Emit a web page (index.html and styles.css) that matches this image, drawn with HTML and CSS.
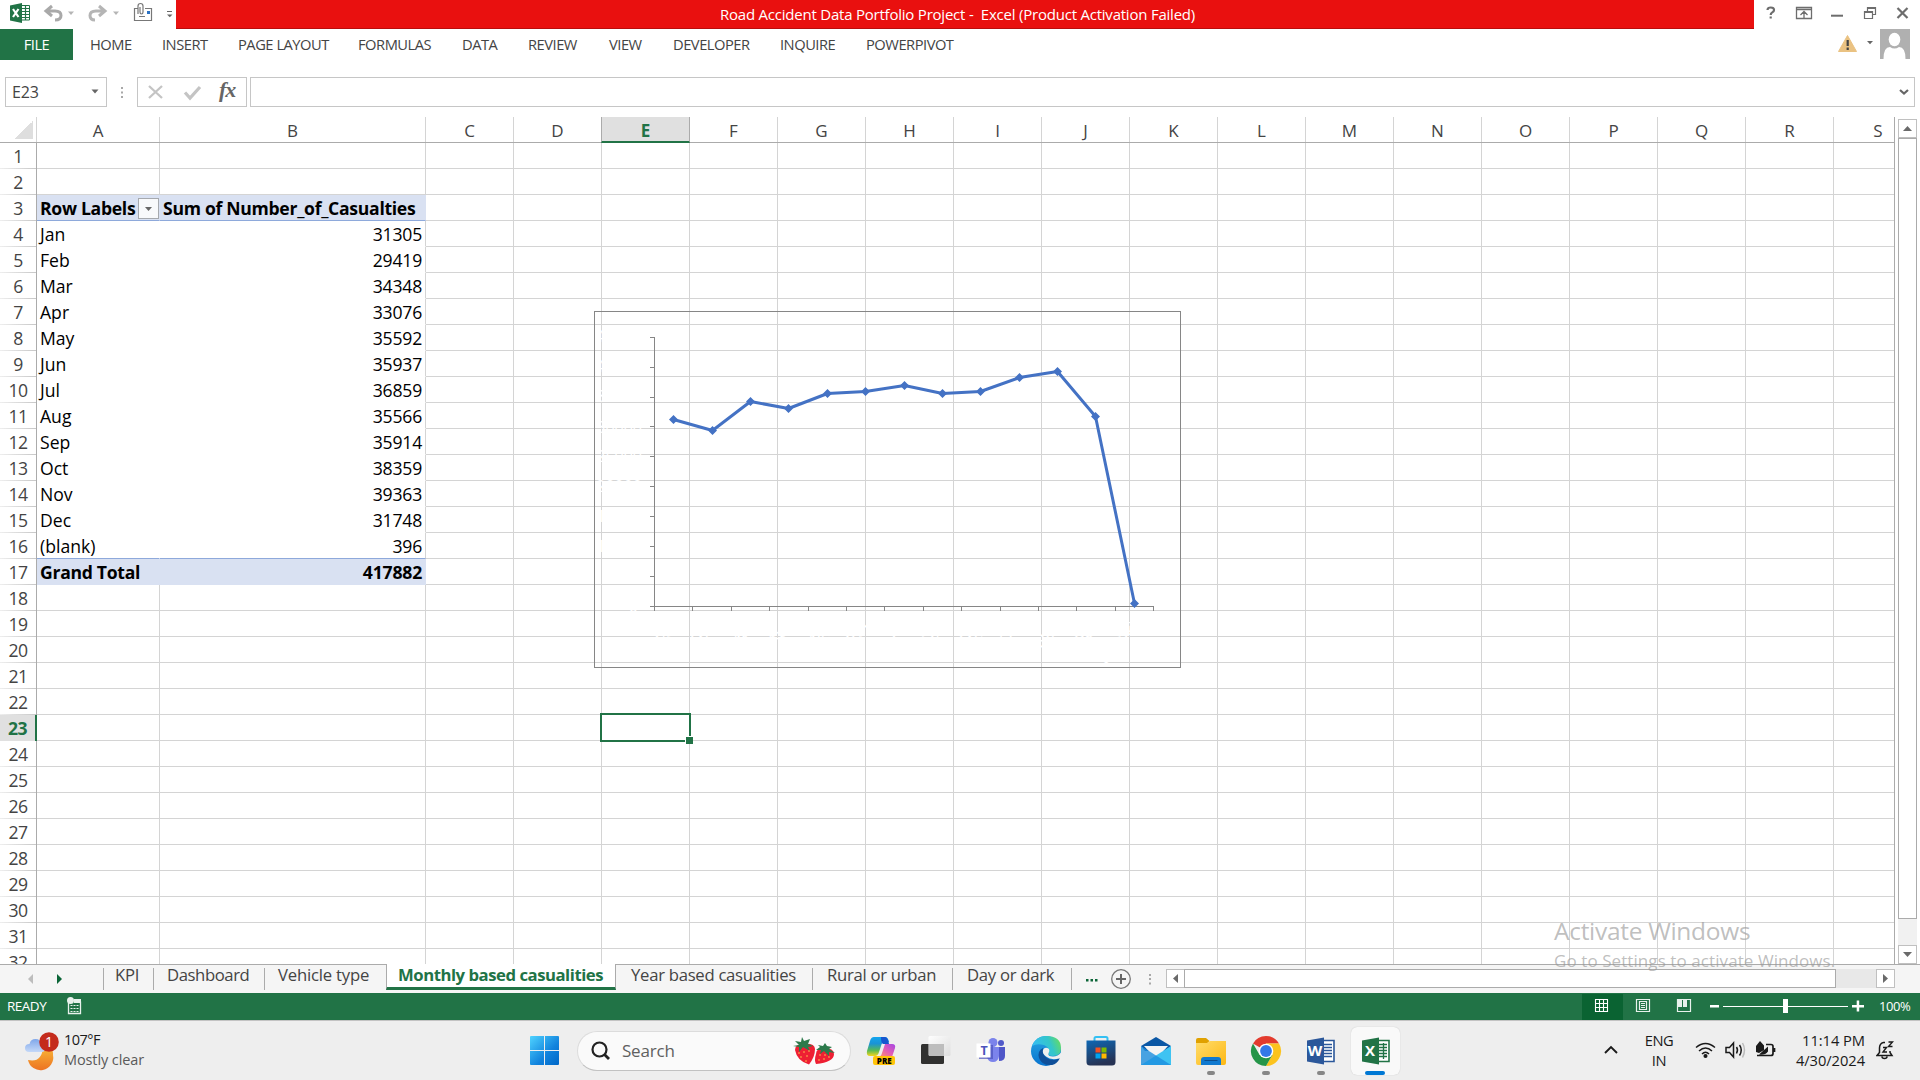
FILE: index.html
```html
<!DOCTYPE html>
<html lang="en">
<head>
<meta charset="utf-8">
<title>Road Accident Data Portfolio Project - Excel</title>
<link rel="stylesheet" href="styles.css">
</head>
<body>
<header class="titlebar">
  <div class="quick">
    <svg width="176" height="29" viewBox="0 0 176 29">
      <path d="M10 5.500L22 3v20l-12-2.500z" fill="#217346"/>
      <path d="M22 5.500h7.500v14.500H22" fill="#fff" stroke="#217346"/>
      <path d="M22 8.500h7M22 11.500h7M22 14.500h7M22 17.500h7M25.500 6v14" stroke="#217346" stroke-width="1.200"/>
      <path d="M13 9l5.500 8M18.500 9L13 17" stroke="#fff" stroke-width="2.200"/>
      <path d="M52 6l-6 5 6 5M47 11h8q6 0 6 4.500t-6 4.500" fill="none" stroke="#a9a9a9" stroke-width="3"/>
      <path d="M68 11.500h6l-3 3.500z" fill="#b5b5b5"/>
      <path d="M99 6l6 5-6 5M104 11h-8q-6 0-6 4.500t5 4.500" fill="none" stroke="#b5b5b5" stroke-width="3"/>
      <path d="M113 11.500h6l-3 3.500z" fill="#b5b5b5"/>
      <path d="M138 8.500h-3.500v12h17v-12H145" fill="#fff" stroke="#777" stroke-width="1.200"/>
      <path d="M138 14V6q0-2.500 2.500-2.500T143 6v6q0 2-1.500 2T140 12V7M139 16.500h6" fill="none" stroke="#777" stroke-width="1.200"/>
      <path d="M147 11h3v3h-3z" fill="#2b72c4"/>
      <path d="M167 11.500h5" stroke="#666"/><path d="M167 14.500h5.500l-2.700 2.800z" fill="#666"/>
    </svg>
  </div>
  <div class="title"><span>Road Accident Data Portfolio Project -&nbsp; Excel (Product Activation Failed)</span></div>
  <div class="winctl">
    <svg width="166" height="29" viewBox="0 0 166 29" fill="none" stroke="#6d6d6d">
      <path d="M13.500 10q0-2.500 3.300-2.500T20 10q0 1.500-1.700 2.400t-1.600 2.600M16.700 16.500v2" stroke-width="2.200"/>
      <path d="M42.500 7.500h15v11h-15zM42.500 9.500h15M50 18v-6M46.500 15l3.500-3.500L53.500 15" stroke-width="1.300"/>
      <path d="M77 15.700h12" stroke-width="2"/>
      <path d="M110.500 11.500h8v7h-8zM110.500 12.500h8M113.500 11V7.500h8v7H119M113.500 8.500h8" stroke-width="1.200"/>
      <path d="M143.500 8l10 10M153.500 8l-10 10" stroke-width="2.200"/>
    </svg>
  </div>
</header>

<nav class="ribbon">
  <span class="file">FILE</span><span>HOME</span><span>INSERT</span><span>PAGE LAYOUT</span><span>FORMULAS</span><span>DATA</span><span>REVIEW</span><span>VIEW</span><span>DEVELOPER</span><span>INQUIRE</span><span>POWERPIVOT</span>
  <svg class="account" width="80" height="31" viewBox="0 0 80 31">
    <path d="M15.500 6.500L24.500 22.500H6.500z" fill="#eac282" stroke="#eac282" stroke-linejoin="round"/>
    <path d="M15.700 11v6M15.700 18.500v2.500" stroke="#444" stroke-width="2.200"/>
    <path d="M35 12h6l-3 3.200z" fill="#666"/>
    <path d="M48 0h30v30H48z" fill="#b0b0b0"/>
    <ellipse cx="62.500" cy="10.500" rx="5.800" ry="6.700" fill="#fff"/>
    <path d="M51.500 30q0-12 6.500-12 4.500 3 9 0 6.500 0 6.500 12z" fill="#fff"/>
  </svg>
</nav>

<div class="formulabar">
  <div class="namebox"><span>E23</span><svg width="8" height="5"><path d="M.5.500h7L4 4.500z" fill="#666"/></svg></div>
  <svg class="grip" width="30" height="30"><path d="M14 10h2v2h-2zM14 14.500h2v2h-2zM14 19h2v2h-2z" fill="#a8a8a8"/></svg>
  <div class="fxbox">
    <svg width="70" height="28" fill="none" stroke="#c4c4c4"><path d="M11 8l13 12M24 8L11 20" stroke-width="2.300"/><path d="M47 14.500l5 5.500L62 9" stroke-width="3.200"/></svg>
    <i>fx</i>
  </div>
  <div class="input"><svg width="10" height="6"><path d="M1 1l4 3.500L9 1" fill="none" stroke="#666" stroke-width="2.200"/></svg></div>
</div>

<main class="sheet">
  <div class="grid">
    <div class="colhead">
      <span class="corner"></span><span class="ca">A</span><span class="cb">B</span><span>C</span><span>D</span><span class="sel">E</span><span>F</span><span>G</span><span>H</span><span>I</span><span>J</span><span>K</span><span>L</span><span>M</span><span>N</span><span>O</span><span>P</span><span>Q</span><span>R</span><span>S</span>
    </div>
    <div class="rows">
      <div class="row"><b>1</b><span></span><span></span><i></i></div>
      <div class="row"><b>2</b><span></span><span></span><i></i></div>
      <div class="row head"><b>3</b><span><em class="t1">Row Labels</em><svg class="filter" width="21" height="21"><rect x=".5" y=".5" width="20" height="20" fill="#f8f9fb" stroke="#a6a9ae"/><path d="M7 9h7l-3.500 4z" fill="#666"/></svg></span><span><em class="t2">Sum of Number_of_Casualties</em></span><i></i></div>
      <div class="row data"><b>4</b><span>Jan</span><span>31305</span><i></i></div>
      <div class="row data"><b>5</b><span>Feb</span><span>29419</span><i></i></div>
      <div class="row data"><b>6</b><span>Mar</span><span>34348</span><i></i></div>
      <div class="row data"><b>7</b><span>Apr</span><span>33076</span><i></i></div>
      <div class="row data"><b>8</b><span>May</span><span>35592</span><i></i></div>
      <div class="row data"><b>9</b><span>Jun</span><span>35937</span><i></i></div>
      <div class="row data"><b>10</b><span>Jul</span><span>36859</span><i></i></div>
      <div class="row data"><b>11</b><span>Aug</span><span>35566</span><i></i></div>
      <div class="row data"><b>12</b><span>Sep</span><span>35914</span><i></i></div>
      <div class="row data"><b>13</b><span>Oct</span><span>38359</span><i></i></div>
      <div class="row data"><b>14</b><span>Nov</span><span>39363</span><i></i></div>
      <div class="row data"><b>15</b><span>Dec</span><span>31748</span><i></i></div>
      <div class="row data last"><b>16</b><span>(blank)</span><span>396</span><i></i></div>
      <div class="row data total"><b>17</b><span>Grand Total</span><span>417882</span><i></i></div>
      <div class="row"><b>18</b><span></span><span></span><i></i></div>
      <div class="row"><b>19</b><span></span><span></span><i></i></div>
      <div class="row"><b>20</b><span></span><span></span><i></i></div>
      <div class="row"><b>21</b><span></span><span></span><i></i></div>
      <div class="row"><b>22</b><span></span><span></span><i></i></div>
      <div class="row active"><b>23</b><span></span><span></span><i></i></div>
      <div class="row"><b>24</b><span></span><span></span><i></i></div>
      <div class="row"><b>25</b><span></span><span></span><i></i></div>
      <div class="row"><b>26</b><span></span><span></span><i></i></div>
      <div class="row"><b>27</b><span></span><span></span><i></i></div>
      <div class="row"><b>28</b><span></span><span></span><i></i></div>
      <div class="row"><b>29</b><span></span><span></span><i></i></div>
      <div class="row"><b>30</b><span></span><span></span><i></i></div>
      <div class="row"><b>31</b><span></span><span></span><i></i></div>
      <div class="row"><b>32</b><span></span><span></span><i></i></div>
    </div>
    <div class="cursor"></div>
    <svg class="chart" width="587" height="357" viewBox="594 311 587 357">
      <rect x="594.500" y="311.500" width="586" height="356" fill="none" stroke="#868686"/>
      <g class="labels" text-anchor="end">
        <text x="642" y="342">45000</text><text x="642" y="372">40000</text><text x="642" y="402">35000</text><text x="642" y="433">30000</text><text x="642" y="462">25000</text><text x="642" y="492">20000</text><text x="642" y="522">15000</text><text x="642" y="552">10000</text><text x="642" y="582">5000</text><text x="638" y="612">0</text>
        <text transform="translate(678 628) rotate(-45)">Jan</text><text transform="translate(716 628) rotate(-45)">Feb</text><text transform="translate(755 628) rotate(-45)">Mar</text><text transform="translate(793 628) rotate(-45)">Apr</text><text transform="translate(832 628) rotate(-45)">May</text><text transform="translate(870 628) rotate(-45)">Jun</text><text transform="translate(908 628) rotate(-45)">Jul</text><text transform="translate(947 628) rotate(-45)">Aug</text><text transform="translate(985 628) rotate(-45)">Sep</text><text transform="translate(1024 628) rotate(-45)">Oct</text><text transform="translate(1062 628) rotate(-45)">Nov</text><text transform="translate(1100 628) rotate(-45)">Dec</text><text transform="translate(1139 628) rotate(-45)">(blank)</text>
      </g>
      <path d="M654.500 337v274M650 606.500h503.500M650 337.500h4M650 367.500h4M650 397.500h4M650 426.500h4M650 456.500h4M650 486.500h4M650 516.500h4M650 546.500h4M650 576.500h4M692.500 606v5M731.500 606v5M769.500 606v5M808.500 606v5M846.500 606v5M884.500 606v5M923.500 606v5M961.500 606v5M1000.500 606v5M1038.500 606v5M1076.500 606v5M1115.500 606v5M1153.500 606v5" fill="none" stroke="#868686"/>
      <polyline points="673.500,419.500 712.500,430.500 750.500,401.500 788.500,408.500 827.500,393.500 865.500,391.500 904.500,385.500 942.500,393.500 980.500,391.500 1019.500,377.500 1057.500,371.500 1095.500,416.500 1134.500,603.500" fill="none" stroke="#4472c4" stroke-width="3" stroke-linejoin="round"/>
      <path fill="#4472c4" d="M673.500 415l4.500 4.500-4.500 4.500-4.500-4.500zM712.500 426l4.500 4.500-4.500 4.500-4.500-4.500zM750.500 397l4.500 4.500-4.500 4.500-4.500-4.500zM788.500 404l4.500 4.500-4.500 4.500-4.500-4.500zM827.500 389l4.500 4.500-4.500 4.500-4.500-4.500zM865.500 387l4.500 4.500-4.500 4.500-4.500-4.500zM904.500 381l4.500 4.500-4.500 4.500-4.500-4.500zM942.500 389l4.500 4.500-4.500 4.500-4.500-4.500zM980.500 387l4.500 4.500-4.500 4.500-4.500-4.500zM1019.500 373l4.500 4.500-4.500 4.500-4.500-4.500zM1057.500 367l4.500 4.500-4.500 4.500-4.500-4.500zM1095.500 412l4.500 4.500-4.500 4.500-4.500-4.500zM1134.500 599l4.500 4.500-4.500 4.500-4.500-4.500z"/>
    </svg>
  </div>
  <div class="vscroll">
    <div class="btn"><svg width="9" height="5"><path d="M0 5h9L4.500 0z" fill="#6a6a6a"/></svg></div>
    <div class="thumb"></div>
    <div class="btn down"><svg width="9" height="5"><path d="M0 0h9L4.500 5z" fill="#6a6a6a"/></svg></div>
  </div>
</main>

<div class="tabbar">
  <div class="tabnav"><svg width="103" height="28"><path d="M33 9v10l-5-5z" fill="#bdbdbd"/><path d="M57 9v10l5-5z" fill="#0b6537"/></svg></div>
  <div class="tab s1"><span>KPI</span></div>
  <div class="tab s2"><span>Dashboard</span></div>
  <div class="tab s3"><span>Vehicle type</span></div>
  <div class="tab s4"><span>Monthly based casualities</span></div>
  <div class="tab s5"><span>Year based casualities</span></div>
  <div class="tab s6"><span>Rural or urban</span></div>
  <div class="tab s7"><span>Day or dark</span></div>
  <svg class="more" width="94" height="28"><path d="M14 14h2.500v2.500H14zM18.500 14H21v2.500h-2.500zM23 14h2.500v2.500H23z" fill="#0b6537"/><circle cx="49" cy="14" r="9.300" fill="none" stroke="#777" stroke-width="1.300"/><path d="M44 14h10M49 9v10" stroke="#666" stroke-width="2"/><path d="M77 9h2v2h-2zM77 13h2v2h-2zM77 17.500h2v2h-2z" fill="#a8a8a8"/></svg>
  <div class="hscroll">
    <div class="btn"><svg width="5" height="9"><path d="M5 0v9L0 4.500z" fill="#6a6a6a"/></svg></div>
    <div class="thumb"></div>
    <div class="btn right"><svg width="5" height="9"><path d="M0 0v9l5-4.500z" fill="#6a6a6a"/></svg></div>
  </div>
</div>

<div class="status">
  <span class="ready">READY</span>
  <svg width="20" height="22" viewBox="0 0 20 22"><path d="M3.500 7v10.500h12V5.500" fill="none" stroke="#e8f1ec" stroke-width="1.300"/><path d="M9 3h7v4H9z" fill="#e8f1ec"/><path d="M5.500 9.500h9M5.500 12.500h9M5.500 15.500h9" stroke="#e8f1ec" stroke-width="1.200" stroke-dasharray="2 1"/><circle cx="5.500" cy="4.500" r="3.500" fill="#e8f1ec"/></svg>
  <div class="views">
    <svg class="on" width="41" height="26" fill="none" stroke="#fff"><path d="M13.500 5.500h12v12h-12zM17.500 5v13M21.500 5v13M13 9.500h13M13 13.500h13" stroke-width="1.100"/></svg>
    <svg width="41" height="26" fill="none" stroke="#e8f1ec"><path d="M13.500 5.500h13v12h-13zM16.500 7.500h7v8h-7zM18 9.500h4M18 11.500h4M18 13.500h4" stroke-width="1.200"/></svg>
    <svg width="41" height="26" fill="none" stroke="#e8f1ec"><path d="M13.500 5.500h13v12h-13z" stroke-width="1.200"/><path d="M14 5h4v8h-4zM19 5h4v8h-4z" fill="#e8f1ec" stroke="none"/></svg>
    <svg width="166" height="26"><path d="M5 11h9v2.500H5zM18 12h125v1H18zM78 5h5v14h-5zM147 11h12v2.500h-12zM151.700 6.500h2.500v11h-2.500z" fill="#fff"/></svg>
  </div>
  <span class="zoom">100%</span>
</div>

<footer class="taskbar">
  <div class="weather">
    <svg width="40" height="46" viewBox="0 0 40 46">
      <defs><linearGradient id="moon" x2="0" y2="1"><stop stop-color="#f9b938"/><stop offset="1" stop-color="#ed7322"/></linearGradient><linearGradient id="cloud" x2="0" y2="1"><stop stop-color="#7fa7ea"/><stop offset="1" stop-color="#c4d8f8"/></linearGradient></defs>
      <path d="M26 18a13 13 0 0 1 3 9a12.500 12.500 0 0 1-25 5q14 3 15-13z" fill="url(#moon)"/>
      <path d="M5 24q-4 0-4-4t4.500-4q1-5 6-5t6 5q4 0 4 4t-4 4z" fill="url(#cloud)"/>
      <circle cx="25" cy="14" r="9.800" fill="#c42b1c"/><text class="badge" x="25" y="19">1</text>
    </svg>
    <div><p class="w1">107°F</p><p class="w2">Mostly clear</p></div>
  </div>
  <svg class="start" width="29" height="29" viewBox="0 0 29 29"><defs><linearGradient id="win" x2="1" y2="1"><stop stop-color="#4fd3ff"/><stop offset=".6" stop-color="#1183dd"/><stop offset="1" stop-color="#0067c7"/></linearGradient></defs><path d="M1 0h13v14H0V1q0-1 1-1zM15 0h13q1 0 1 1v13H15zM0 15h14v14H1q-1 0-1-1zM15 15h14v13q0 1-1 1H15z" fill="url(#win)"/></svg>
  <div class="search">
    <svg width="20" height="20" viewBox="0 0 20 20"><circle cx="8.500" cy="8.500" r="7" fill="none" stroke="#222" stroke-width="2.200"/><path d="M13.500 13.500l4.500 4.500" stroke="#222" stroke-width="2.800"/></svg>
    <span>Search</span>
    <svg class="berries" width="42" height="28" viewBox="0 0 42 28">
      <path d="M2 13q0-6 8-6 12-1 12 5 0 8-6 15.500Q4 24 2 13z" fill="#ee1f33"/><path d="M23 17q0-6 8-6 10 0 10 6 0 8-18 10-2-4 0-10z" fill="#ee1f33"/>
      <path d="M0 9l6-1-4-4 6 1 1-5 2 4 6-2-2 5 5 2-5 1 2 4-7-4-4 5v-5zM23 13l4-3-2-2 5 1 2-3 2 3 5 1-3 2 6 4-6-1v4l-5-5-4 3 1-4z" fill="#2c7a4b"/>
      <g fill="#ffc94f"><circle cx="6" cy="16" r=".8"/><circle cx="11" cy="15" r=".8"/><circle cx="16" cy="14" r=".8"/><circle cx="8" cy="20" r=".8"/><circle cx="14" cy="19" r=".8"/><circle cx="13" cy="24" r=".8"/><circle cx="27" cy="18" r=".8"/><circle cx="32" cy="18" r=".8"/><circle cx="26" cy="23" r=".8"/><circle cx="31" cy="22" r=".8"/><circle cx="36" cy="20" r=".8"/></g>
    </svg>
  </div>
  <div class="apps">
    <div class="app"><svg width="32" height="32" viewBox="0 0 32 32">
      <defs><linearGradient id="c1" x2="0" y2="1"><stop stop-color="#12a5ee"/><stop offset=".35" stop-color="#1a93d6"/><stop offset=".7" stop-color="#55b957"/><stop offset="1" stop-color="#f4d51c"/></linearGradient><linearGradient id="c2" x1="1" x2="0" y2="1"><stop stop-color="#a445e4"/><stop offset=".5" stop-color="#e35db5"/><stop offset="1" stop-color="#ff9a62"/></linearGradient></defs>
      <path d="M9 2h11q3 0 4 5h-5q-2 0-3 4l-2 6q-1 4-4 4H5q-4 0-3-5L5 6q1-4 4-4z" fill="url(#c1)"/><path d="M16 2h4q3 0 4 7h-6q-2-1-2-7z" fill="#1756cf"/>
      <path d="M20 9h7q4 0 3 4l-3 9H13q3 0 4-4z" fill="url(#c2)"/><rect x="8" y="21" width="22" height="9" rx="2" fill="#ffc409"/><text class="pre" x="19.300" y="28.500">PRE</text></svg></div>
    <div class="app"><svg width="32" height="32" viewBox="0 0 32 32"><defs><linearGradient id="tv" x2="1" y2="1"><stop stop-color="#fff"/><stop offset="1" stop-color="#ddd"/></linearGradient></defs><rect x="1" y="9" width="23" height="20" rx="1.500" fill="#30302f"/><rect x="8.500" y="1" width="22" height="20" rx="1.500" fill="url(#tv)" opacity=".94"/><path d="M9 9h15v12H9z" fill="#bdbdbd"/></svg></div>
    <div class="app"><svg width="32" height="32" viewBox="0 0 32 32"><circle cx="18" cy="7.500" r="4.500" fill="#7b83eb"/><circle cx="26" cy="8" r="3" fill="#5059c9"/><path d="M23 12h7v9q0 5-6 5z" fill="#4f56c8"/><path d="M10 12h14v9q-1 6-6 6t-6-5z" fill="#7b83eb"/><rect x="4" y="10" width="14" height="14" fill="#4b53bc" opacity=".7"/><rect x="1.500" y="8.500" width="14" height="14" fill="#fff"/><text class="tt" x="9" y="20">T</text></svg></div>
    <div class="app"><svg width="32" height="32" viewBox="0 0 32 32">
      <defs><linearGradient id="e1" y1=".3" x2="1" y2="0"><stop stop-color="#35bdf2"/><stop offset=".55" stop-color="#33c6ca"/><stop offset="1" stop-color="#6fe04c"/></linearGradient><linearGradient id="e2" x2="0" y2="1"><stop stop-color="#28a7e2"/><stop offset="1" stop-color="#0873cf"/></linearGradient></defs>
      <circle cx="16" cy="16" r="15" fill="url(#e2)"/><path d="M2 11Q6 1 16 1q15 0 15 12 0 8-8 8-6 0-4-4 0-5-5-7-7-2-12 1z" fill="url(#e1)"/><path d="M13 13q-6 3-4 10 3 8 13 7 5-1 8-7-7 4-13 0-5-4-4-10z" fill="#0f4f99"/><path d="M13 15q2-4 6-1 1 2-.5 4.500-1 3 4.500 3 5 0 8-4l1 5-3 1q-8 2-13-2-4-3-3-6.500z" fill="#eee"/></svg></div>
    <div class="app"><svg width="32" height="32" viewBox="0 0 32 32"><defs><linearGradient id="st" x2=".3" y2="1"><stop stop-color="#0e67b4"/><stop offset="1" stop-color="#263253"/></linearGradient></defs><path d="M9.500 7V3.500q0-1.500 1.500-1.500h10q1.500 0 1.500 1.500V7" fill="none" stroke="#33c0f3" stroke-width="2"/><path d="M1.500 5.500h29V27q0 3.500-3.500 3.500H5Q1.500 30.500 1.500 27z" fill="url(#st)"/><path d="M10.500 12.500h5v5h-5z" fill="#f25022"/><path d="M16.500 12.500h5v5h-5z" fill="#7fba00"/><path d="M10.500 18.500h5v5h-5z" fill="#00a4ef"/><path d="M16.500 18.500h5v5h-5z" fill="#ffb900"/></svg></div>
    <div class="app"><svg width="32" height="32" viewBox="0 0 32 32"><path d="M1 11L16 2l15 9-4 5H5z" fill="#0b57a5"/><path d="M4 11h24L16 24z" fill="#f4f4f4"/><path d="M31 11v19H1z" fill="#3ec3f2"/><path d="M1 11v19h30z" fill="#1d8fde" opacity=".8"/></svg></div>
    <div class="app run"><svg width="32" height="32" viewBox="0 0 32 32"><defs><linearGradient id="fo" x2="1" y2="1"><stop stop-color="#ffdc6b"/><stop offset="1" stop-color="#fdb813"/></linearGradient></defs><path d="M1 9V5q0-2 2-2h8l3.500 3-3 3z" fill="#e0a100"/><path d="M1 8h11l3-2h16v22q0 2-2 2H3q-2 0-2-2z" fill="url(#fo)"/><path d="M6 30v-5q0-3 3-3h14q3 0 3 3v5z" fill="#1079cf"/><path d="M9.500 25.500h13" stroke="#0b4d8d"/></svg></div>
    <div class="app run"><svg width="32" height="32" viewBox="0 0 32 32"><path d="M16 16L3 8.500A15 15 0 0 1 29 8.500H16z" fill="#e33b2e"/><path d="M29 8.500A15 15 0 0 1 16 31l6.500-11.500L16 8.500z" fill="#fcc31e"/><path d="M3 8.500A15 15 0 0 0 16 31l6.500-11.300-13 0z" fill="#259548"/><circle cx="16" cy="16" r="7.300" fill="#fff"/><circle cx="16" cy="16" r="5.900" fill="#3478e8"/></svg></div>
    <div class="app run"><svg width="32" height="32" viewBox="0 0 32 32"><path d="M17 5.500h12v21H17z" fill="#fff" stroke="#2b579a" stroke-width="1.600"/><path d="M19 9.500h8M19 12.500h8M19 15.500h8M19 18.500h8M19 21.500h8" stroke="#2b579a" stroke-width="1.500"/><path d="M2 5.500L19 2.500v27L2 26.500z" fill="#2b579a"/><text class="ot" x="10" y="21">W</text></svg></div>
    <div class="app current"><svg width="32" height="32" viewBox="0 0 32 32"><path d="M17 5.500h12v21H17z" fill="#fff" stroke="#217346" stroke-width="1.600"/><path d="M19 9.500h8M19 12.500h8M19 15.500h8M19 18.500h8M19 21.500h8M23.500 8v16" stroke="#217346" stroke-width="1.300"/><path d="M2 5.500L19 2.500v27L2 26.500z" fill="#217346"/><text class="ot" x="10" y="21">X</text></svg></div>
  </div>
  <div class="tray">
    <svg width="16" height="9"><path d="M2 8l6-6 6 6" fill="none" stroke="#1a1a1a" stroke-width="1.900"/></svg>
    <div class="lang">ENG<br>IN</div>
    <svg class="sys" width="84" height="20" viewBox="0 0 84 20" fill="none" stroke="#1a1a1a" stroke-width="1.500">
      <path d="M1 7.500q9.500-8 19 0M4 11q6.500-6 13 0M7 14q3.500-3.500 7 0"/><circle cx="10.500" cy="16" r="1.300" fill="#1a1a1a"/>
      <path d="M31 7.500h3.500l4-4.500v14l-4-4.500H31zM41.500 7q2 3 0 6.500M44.500 5q3.500 5 0 10.500"/><path d="M47.500 3q4 7 0 14.500" stroke="#bbb"/>
      <path d="M71 4.500h5q2 0 2 2v7q0 2-2 2H62M79.500 8v4" stroke-width="1.700"/><path d="M61 12V6l4-5 4 4.500v4.500l-5 3zM64 14.500l9-8v5q-3 4-9 3z" fill="#1a1a1a" stroke="none"/>
    </svg>
    <div class="clock">11:14 PM<br>4/30/2024</div>
    <svg class="bell" width="18" height="20" viewBox="0 0 18 20"><path d="M9 2.500H7.500Q3.500 3.500 3.500 8v4.500L1 15.500h15l-2-3V11M6 16.500q0 2 2.500 2t2.500-2" fill="none" stroke="#1a1a1a" stroke-width="1.500"/><path d="M7 7.500h3.500l-3.500 4.500h4M12.500 2h4l-4 4.500h4" fill="none" stroke="#1a1a1a" stroke-width="1.400"/></svg>
  </div>
</footer>
<div class="watermark"><p class="a1">Activate Windows</p><p class="a2">Go to Settings to activate Windows.</p></div>
</body>
</html>
```
FILE: styles.css
```css
* { box-sizing: border-box; }
body { margin: 0; width: 1920px; height: 1080px; overflow: hidden; background: #fff; display: flex; flex-direction: column; font-family: "Open Sans", "Noto Sans", sans-serif; color: #444; }
svg { display: block; flex: none; }
p { margin: 0; }

.titlebar { display: flex; height: 29px; }
.quick { width: 176px; }
.title { width: 1578px; background: #e9100f; border-bottom: 1px solid #b90d0d; color: #fff; text-align: center; font-size: 15px; line-height: 28px; letter-spacing: -0.22px; white-space: nowrap; }
.title span { margin-right: 15px; }

.ribbon { display: grid; grid-template-columns: 90px 72px 76px 120px 104px 66px 81px 64px 107px 86px 966px 88px; height: 31px; font-size: 14.700px; line-height: 30px; letter-spacing: -0.48px; }
.ribbon span { white-space: nowrap; }
.ribbon .file { width: 73px; background: #217346; color: #fff; text-align: center; }

.formulabar { display: flex; height: 57px; padding: 17px 5px 10px; }
.namebox { display: flex; align-items: center; justify-content: space-between; width: 102px; height: 30px; border: 1px solid #c6c6c6; padding: 0 7px 2px 6px; font-size: 16px; letter-spacing: -0.2px; }
.namebox span { position: relative; top: 1px; }
.fxbox { display: flex; width: 110px; height: 30px; border: 1px solid #c6c6c6; margin-right: 3px; }
.fxbox i { font: italic bold 22px/24px "Liberation Serif", serif; color: #666; margin-left: 11px; letter-spacing: -1px; }
.input { display: flex; justify-content: flex-end; align-items: center; flex: 1; height: 30px; border: 1px solid #c6c6c6; padding-right: 5px; }

.sheet { display: flex; height: 847px; }
.grid { position: relative; width: 1895px; border-right: 1px solid #ababab; overflow: hidden; font-size: 17.600px; }
.colhead { display: flex; width: 1980px; height: 26px; border-bottom: 1px solid #ababab; font-size: 17px; line-height: 27px; text-align: center; background: #fff; }
.colhead span { width: 88px; flex: none; border-right: 1px solid #d4d4d4; }
.colhead span:last-child { border-right: 0; }
.colhead .corner { width: 37px; background: linear-gradient(135deg, #fff 50%, #dedede 50%) 15px 4px / 18px 18px no-repeat; }
.colhead .ca { width: 123px; }
.colhead .cb { width: 266px; }
.colhead .sel { position: relative; height: 26px; margin: 0 0 0 -1px; width: 89px; background: #e0e0e0; border: solid #ababab; border-width: 0 1px; border-bottom: 2px solid #217346; color: #217346; font-weight: 700; }
.row { display: flex; height: 26px; line-height: 26px; }
.row b { width: 37px; border-right: 1px solid #ababab; text-align: center; font-weight: 400; background: linear-gradient(90deg, #eee, #c8c8c8) 0 100% / 100% 1px no-repeat; letter-spacing: -0.5px; }
.row span { border: solid #d4d4d4; border-width: 0 1px 1px 0; width: 123px; padding: 0 3px; color: #000; white-space: nowrap; display: flex; }
.row span + span { width: 266px; }
.row em { font-style: normal; flex: none; }
.row i { flex: 1; border-bottom: 1px solid #d4d4d4; background: repeating-linear-gradient(90deg, transparent 0 87px, #d4d4d4 87px 88px); }
.data span { border-color: transparent; }
.data span + span { justify-content: flex-end; border-right-color: #d4d4d4; letter-spacing: -0.2px; }
.head span, .total span { background: #d9e1f2; border-color: #d9e1f2; font-weight: 700; letter-spacing: -0.3px; }
.head span { border-bottom-color: #8ea9db; }
.last span { border-bottom-color: #8ea9db; }
.last span + span { border-bottom-color: #8ea9db; }
.total span + span { border-color: #d9e1f2; }
.filter { margin: 3px 0 0 auto; position: relative; left: 3px; }
.row.active b { background: #e0e0e0; border-right: 2px solid #217346; color: #217346; font-weight: 700; }
.cursor { position: absolute; left: 600px; top: 596px; width: 91px; height: 29px; border: 2px solid #217346; }
.cursor::after { content: ""; position: absolute; right: -4px; bottom: -4px; width: 7px; height: 7px; border: 1px solid #fff; border-width: 1px 0 0 1px; background: #217346; }
.chart { position: absolute; left: 594px; top: 194px; }
.labels { fill: #fff; font-size: 16px; }
.vscroll { display: flex; flex-direction: column; width: 19px; margin-left: 3px; padding-top: 2px; background: linear-gradient(#fff 700px, #f1f1f1 700px); }
.btn { display: flex; align-items: center; justify-content: center; width: 19px; height: 19px; border: 1px solid #c0c0c0; background: #fff; flex: none; }
.vscroll .thumb { height: 782px; border: 1px solid #ababab; background: #fff; }
.vscroll .down { margin-top: 26px; }

.tabbar { display: flex; height: 29px; background: #f5f5f5; border-top: 1px solid #ababab; }
.tabnav { width: 104px; background: linear-gradient(#ababab, #ababab) 103px 3px / 1px 22px no-repeat; }
.tab { font-size: 16.700px; line-height: 28px; letter-spacing: -0.28px; white-space: nowrap; background: linear-gradient(#ababab, #ababab) 100% 3px / 1px 22px no-repeat; }
.tab span { position: relative; top: -4px; }
.s1 { width: 50px; padding-left: 11px; }
.s2 { width: 111px; padding-left: 13px; letter-spacing: -0.42px; }
.s3 { width: 121px; padding-left: 13px; background: none; letter-spacing: -0.2px; }
.s4 { width: 230px; height: 26px; margin-top: -1px; padding: 1px 0 0 11px; background: #fff; border: solid #ababab; border-width: 0 1px; border-bottom: 3px solid #217346; color: #217346; font-weight: 700; letter-spacing: -0.46px; }
.s5 { width: 197px; padding-left: 15px; }
.s6 { width: 140px; padding-left: 14px; }
.s7 { width: 119px; padding-left: 14px; }
.hscroll { display: flex; width: 729px; height: 19px; margin-top: 4px; background: #e8e8e8; }
.hscroll .thumb { width: 652px; border: 1px solid #ababab; background: #fff; margin-left: -1px; }
.hscroll .right { margin-left: auto; }

.status { display: flex; height: 27px; background: #217346; color: #fff; align-items: center; font-size: 13.500px; }
.ready { width: 65px; padding: 0 0 1px 7px; letter-spacing: -0.5px; }
.views { display: flex; margin-left: auto; align-self: flex-end; }
.views .on { background: #0a6332; }
.zoom { width: 49px; padding: 0 0 1px 8px; font-size: 13px; letter-spacing: -0.45px; }

.taskbar { position: relative; display: flex; align-items: center; height: 60px; background: #eee; border-top: 1px solid #c3c3c3; }
.weather { display: flex; width: 530px; padding-left: 24px; font-size: 14.500px; line-height: 20px; letter-spacing: -0.1px; }
.weather div { padding-top: 2px; }
.w1 { color: #1a1a1a; letter-spacing: -0.5px; }
.w2 { color: #5a5a5a; }
.badge { fill: #fff; font-size: 14px; text-anchor: middle; }
.search { display: flex; align-items: center; width: 274px; height: 40px; margin-left: 18px; padding: 0 15px 0 13px; background: #fafafa; border: 1px solid #dcdcdc; border-bottom-color: #c2c2c2; border-radius: 20px; font-size: 17px; color: #606060; letter-spacing: -0.2px; }
.search span { margin-left: 11px; }
.berries { margin-left: auto; }
.apps { display: flex; margin-left: 2px; }
.app { position: relative; display: flex; align-items: center; justify-content: center; width: 49px; height: 48px; margin: 0 3px; border-radius: 6px; }
.run::after, .current::after { content: ""; position: absolute; bottom: 0; left: 21px; width: 8px; height: 4px; border-radius: 2px; background: #868686; }
.current { background: #f9f9f9; box-shadow: 0 0 1px #bbb; }
.current::after { left: 14px; width: 20px; background: #0078d4; }
.pre { font-size: 8px; font-weight: 800; text-anchor: middle; fill: #000; }
.tt { font-size: 12.500px; font-weight: 700; text-anchor: middle; fill: #4b53bc; }
.ot { font-size: 15px; font-weight: 700; text-anchor: middle; fill: #fff; }
.tray { display: flex; align-items: center; margin-left: auto; padding: 0 26px 2px 0; font-size: 14.700px; line-height: 20px; letter-spacing: -0.4px; color: #1a1a1a; }
.lang { width: 34px; margin-left: 23px; text-align: center; }
.sys { margin-left: 19px; }
.clock { width: 86px; text-align: right; letter-spacing: -0.05px; }
.bell { margin-left: 11px; }

.watermark { position: absolute; left: 1554px; top: 912px; color: rgba(150, 150, 150, .62); white-space: nowrap; }
.a1 { font-size: 24.500px; line-height: 38px; letter-spacing: -0.3px; }
.a2 { font-size: 17px; line-height: 22px; letter-spacing: 0.08px; }
```
